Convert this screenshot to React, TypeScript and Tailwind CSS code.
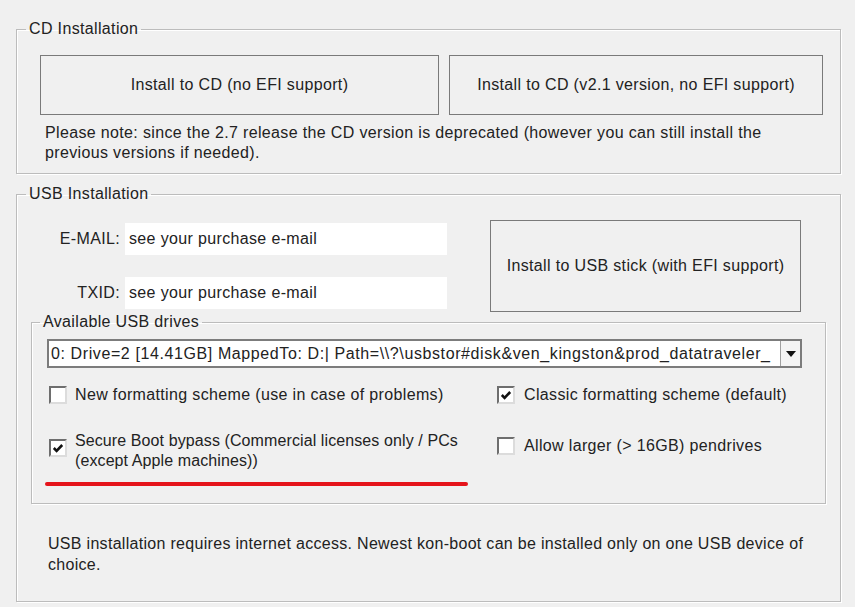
import React from "react";

function CheckBox({ checked = false }: { checked?: boolean }) {
  return (
    <span className="flex h-[18px] w-[18px] shrink-0 items-center justify-center border-2 border-t-[#6e6e6e] border-l-[#6e6e6e] border-r-[#dcdcdc] border-b-[#dcdcdc] bg-white">
      {checked && (
        <svg viewBox="0 0 12 12" className="h-[12px] w-[12px]">
          <path d="M1.8 6 L4.6 8.8 L10.2 3" fill="none" stroke="#111" strokeWidth="2.6" />
        </svg>
      )}
    </span>
  );
}

export default function App() {
  return (
    <div
      className="h-[607px] w-[855px] overflow-hidden bg-[#f0f0f0] pl-[16px] pt-[19px] text-[16px] leading-[20px] tracking-[0.35px] text-[#222]"
      style={{ fontFamily: '"Liberation Sans", Arial, sans-serif' }}
    >
      {/* CD Installation */}
      <fieldset className="w-[825px] border border-[#bcbcbc] shadow-[inset_1px_1px_0_#fff,1px_1px_0_#fff]">
        <legend className="ml-[9px] px-[3px]">CD Installation</legend>
        <div className="pl-[23px] pt-[16px] pb-[10px]">
          <div className="flex gap-[10px]">
            <button className="flex h-[60px] w-[399px] items-center justify-center border border-[#7a7a7a] bg-[#f0f0f0]">
              Install to CD (no EFI support)
            </button>
            <button className="flex h-[60px] w-[374px] items-center justify-center border border-[#7a7a7a] bg-[#f0f0f0]">
              Install to CD (v2.1 version, no EFI support)
            </button>
          </div>
          <p className="mt-[8px] ml-[5px] whitespace-nowrap">
            Please note: since the 2.7 release the CD version is deprecated (however you can still install the
            <br />
            previous versions if needed).
          </p>
        </div>
      </fieldset>

      {/* USB Installation */}
      <fieldset className="mt-[10px] w-[825px] border border-[#bcbcbc] shadow-[inset_1px_1px_0_#fff,1px_1px_0_#fff]">
        <legend className="ml-[9px] px-[3px]">USB Installation</legend>
        <div className="pt-[16px] pb-[26px]">
          <div className="flex">
            <div className="flex flex-col gap-[22px] pt-[3px]">
              <div className="flex items-center">
                <span className="w-[108px] pr-[5px] text-right">E-MAIL:</span>
                <div className="flex h-[32px] w-[322px] items-center bg-white pl-[4px]">see your purchase e-mail</div>
              </div>
              <div className="flex items-center">
                <span className="w-[108px] pr-[5px] text-right">TXID:</span>
                <div className="flex h-[32px] w-[322px] items-center bg-white pl-[4px]">see your purchase e-mail</div>
              </div>
            </div>
            <button className="ml-[43px] flex h-[92px] w-[311px] items-center justify-center border border-[#7a7a7a] bg-[#f0f0f0]">
              Install to USB stick (with EFI support)
            </button>
          </div>

          {/* Available USB drives */}
          <fieldset className="ml-[14px] w-[795px] border border-[#bcbcbc] shadow-[inset_1px_1px_0_#fff,1px_1px_0_#fff]">
            <legend className="ml-[8px] px-[3px]">Available USB drives</legend>
            <div className="px-[15px] pt-[7px] pb-[17px]">
              <div className="flex h-[29px] w-[755px] items-center border-2 border-[#7c7c7c] bg-white">
                <span className="flex-1 overflow-hidden whitespace-nowrap pl-[2px] tracking-[0.6px]">
                  0: Drive=2 [14.41GB] MappedTo: D:| Path=\\?\usbstor#disk&amp;ven_kingston&amp;prod_datatraveler_
                </span>
                <span className="flex h-full w-[20px] items-center justify-center border-l border-[#a0a0a0] bg-[#f4f4f4]">
                  <svg viewBox="0 0 10 6" className="h-[6px] w-[10px]">
                    <path d="M0 0 H10 L5 6 Z" fill="#111" />
                  </svg>
                </span>
              </div>

              <div className="mt-[17px] grid grid-cols-[448px_1fr] pl-[2px]">
                <label className="flex items-center gap-[8px]">
                  <CheckBox />
                  <span>New formatting scheme (use in case of problems)</span>
                </label>
                <label className="flex items-center gap-[9px]">
                  <CheckBox checked />
                  <span>Classic formatting scheme (default)</span>
                </label>
              </div>

              <div className="mt-[26px] grid grid-cols-[448px_1fr] pl-[2px]">
                <label className="flex items-start gap-[8px]">
                  <span className="mt-[8px]">
                    <CheckBox checked />
                  </span>
                  <span className="tracking-[0.1px]">
                    Secure Boot bypass (Commercial licenses only / PCs
                    <br />
                    (except Apple machines))
                  </span>
                </label>
                <label className="mt-[5px] flex h-[20px] items-center gap-[9px]">
                  <CheckBox />
                  <span>Allow larger (&gt; 16GB) pendrives</span>
                </label>
              </div>

              <div className="ml-[-2px] mt-[11px] h-[4px] w-[423px] rounded-full bg-[#e5141b]" />
            </div>
          </fieldset>

          <p className="mt-[29px] ml-[31px] whitespace-nowrap leading-[21px] tracking-[0.3px]">
            USB installation requires internet access. Newest kon-boot can be installed only on one USB device of
            <br />
            choice.
          </p>
        </div>
      </fieldset>
    </div>
  );
}
